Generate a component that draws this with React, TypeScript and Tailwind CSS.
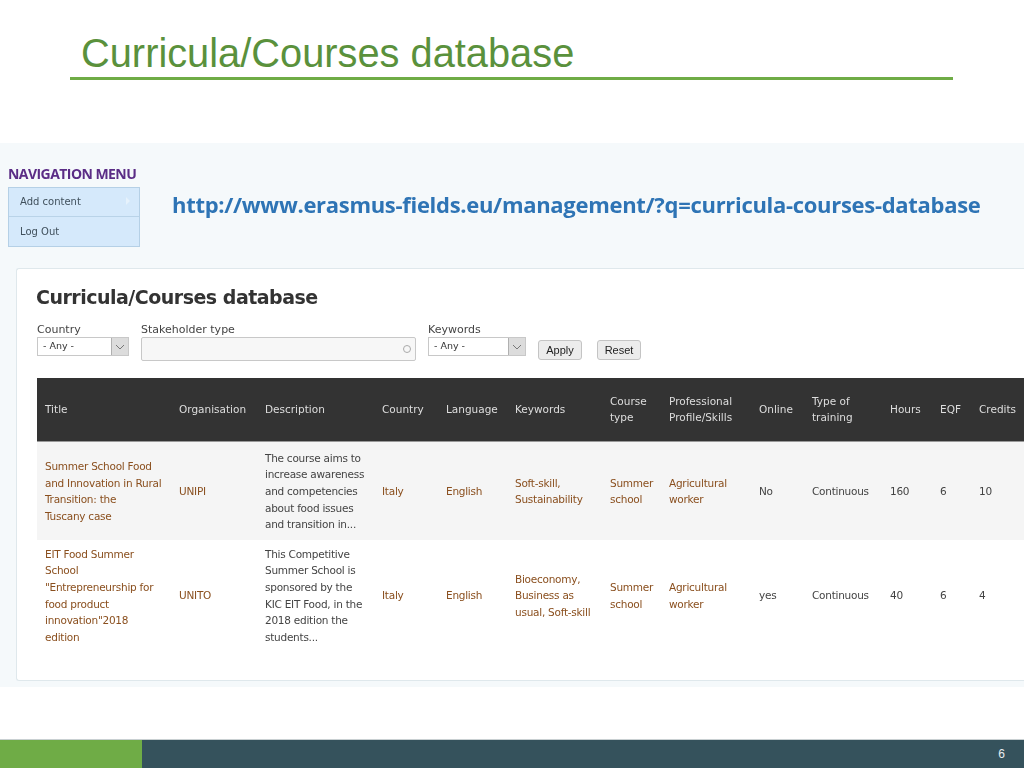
const headers = [
  { label: <>Title</>, w: "w-[134px]" },
  { label: <>Organisation</>, w: "w-[86px]" },
  { label: <>Description</>, w: "w-[117px]" },
  { label: <>Country</>, w: "w-[64px]" },
  { label: <>Language</>, w: "w-[69px]" },
  { label: <>Keywords</>, w: "w-[95px]" },
  { label: <>Course<br />type</>, w: "w-[59px]" },
  { label: <>Professional<br />Profile/Skills</>, w: "w-[90px]" },
  { label: <>Online</>, w: "w-[53px]" },
  { label: <>Type of<br />training</>, w: "w-[78px]" },
  { label: <>Hours</>, w: "w-[50px]" },
  { label: <>EQF</>, w: "w-[39px]" },
  { label: <>Credits</>, w: "w-[70px]" },
];

const rows = [
  {
    bg: "bg-[#f5f5f5]",
    h: "h-[99px]",
    cells: [
      [<>Summer School Food<br />and Innovation in Rural<br />Transition: the<br />Tuscany case</>, true],
      [<>UNIPI</>, true],
      [<>The course aims to<br />increase awareness<br />and competencies<br />about food issues<br />and transition in...</>, false],
      [<>Italy</>, true],
      [<>English</>, true],
      [<>Soft-skill,<br />Sustainability</>, true],
      [<>Summer<br />school</>, true],
      [<>Agricultural<br />worker</>, true],
      [<>No</>, false],
      [<>Continuous</>, false],
      [<>160</>, false],
      [<>6</>, false],
      [<>10</>, false],
    ],
  },
  {
    bg: "bg-white",
    h: "h-[110px]",
    cells: [
      [<>EIT Food Summer<br />School<br />"Entrepreneurship for<br />food product<br />innovation"2018<br />edition</>, true],
      [<>UNITO</>, true],
      [<>This Competitive<br />Summer School is<br />sponsored by the<br />KIC EIT Food, in the<br />2018 edition the<br />students...</>, false],
      [<>Italy</>, true],
      [<>English</>, true],
      [<>Bioeconomy,<br />Business as<br />usual, Soft-skill</>, true],
      [<>Summer<br />school</>, true],
      [<>Agricultural<br />worker</>, true],
      [<>yes</>, false],
      [<>Continuous</>, false],
      [<>40</>, false],
      [<>6</>, false],
      [<>4</>, false],
    ],
  },
] as const;

function Select({ w }: { w: string }) {
  return (
    <div className={`${w} h-[19px] flex items-stretch border border-[#c8c8c8] bg-white`}>
      <span className="flex-1 pl-[5px] text-[9.5px] leading-[16px] text-[#333]">- Any -</span>
      <span className="w-[17px] bg-[#dcdcdc] border-l border-[#b0b0b0] flex items-center justify-center">
        <svg width="10" height="6" viewBox="0 0 10 6" fill="none" stroke="#777" strokeWidth="1">
          <path d="M1 1l4 4 4-4" />
        </svg>
      </span>
    </div>
  );
}

function Btn({ children }: { children: string }) {
  return (
    <button className="w-[44px] h-[20px] rounded-[3px] border border-[#c4c4c4] bg-[#ececec] text-[11px] leading-[17px] text-[#222] font-['Liberation_Sans',sans-serif]">
      {children}
    </button>
  );
}

export default function App() {
  return (
    <div className="w-[1024px] h-[768px] overflow-hidden bg-white flex flex-col font-['Liberation_Sans',sans-serif]">
      <header className="h-[143px] shrink-0 pt-[30px] pl-[70px]">
        <div className="w-[883px] h-[50px] border-b-[3px] border-[#6fac46] pl-[11px]">
          <h1 className="text-[39.8px] leading-[46px] text-[#5a913c] font-normal whitespace-nowrap">Curricula/Courses database</h1>
        </div>
      </header>

      <section className="h-[544px] shrink-0 bg-[#f5f9fb] pt-[24px] font-['DejaVu_Sans',sans-serif] blur-[0.3px]">
        <div className="flex pl-[8px] h-[101px]">
          <div className="w-[132px] shrink-0">
            <div className="h-[20px] font-['Open_Sans',sans-serif] text-[14px] leading-[14px] font-bold text-[#5b2d86] tracking-[-0.55px] whitespace-nowrap">NAVIGATION MENU</div>
            <ul className="border border-[#b5d0e6] bg-[#d5e9fb] text-[10px] text-[#40505c]">
              <li className="h-[29px] pl-[11px] leading-[27px] border-b border-[#b9d3e8] flex justify-between pr-[9px]">
                <span>Add content</span>
                <svg width="4" height="8" viewBox="0 0 4 8" className="mt-[9px]"><path d="M0 0l4 4-4 4z" fill="#e6f2fc" /></svg>
              </li>
              <li className="h-[29px] pl-[11px] leading-[29px]">Log Out</li>
            </ul>
          </div>
          <a className="ml-[32px] mt-[20px] h-[34px] text-[22px] leading-[34px] font-bold text-[#2e74b5] font-['Open_Sans',sans-serif] tracking-[-0.3px] whitespace-nowrap">
            http://www.erasmus-fields.eu/management/?q=curricula-courses-database
          </a>
        </div>

        <div className="ml-[16px] h-[413px] bg-white border-t border-l border-b border-[#dfe8ec] rounded-tl-[3px] rounded-bl-[3px] pl-[20px] pt-[14px] overflow-hidden">
          <h2 className="h-[30px] text-[19px] leading-[28px] font-bold text-[#333] tracking-[-0.5px] whitespace-nowrap -ml-[1px]">Curricula/Courses database</h2>
          <div className="flex mt-[10px] h-[55px] items-start text-[11px] text-[#444]">
            <div className="w-[92px]">
              <div className="h-[14px] leading-[14px]">Country</div>
              <Select w="w-[92px]" />
            </div>
            <div className="ml-[12px] w-[275px]">
              <div className="h-[14px] leading-[14px]">Stakeholder type</div>
              <div className="h-[24px] rounded-[2px] border border-[#c8c8c8] bg-[#f7f7f7] flex items-center justify-end pr-[4px]">
                <span className="w-[8px] h-[8px] rounded-full border border-[#aaa]" />
              </div>
            </div>
            <div className="ml-[12px] w-[98px]">
              <div className="h-[14px] leading-[14px]">Keywords</div>
              <Select w="w-[98px]" />
            </div>
            <div className="ml-[12px] mt-[17px]"><Btn>Apply</Btn></div>
            <div className="ml-[15px] mt-[17px]"><Btn>Reset</Btn></div>
          </div>
          <table className="table-fixed w-[1004px] border-collapse text-[10.5px] tracking-[-0.25px] leading-[16.6px]">
            <thead>
              <tr className="h-[63px] bg-[#333333] text-[#dedede] text-left border-b border-[#999] tracking-normal">
                {headers.map((h, i) => (
                  <th key={i} className={`${h.w} pl-[8px] pr-0 font-normal whitespace-nowrap`}>{h.label}</th>
                ))}
              </tr>
            </thead>
            <tbody>
              {rows.map((r, ri) => (
                <tr key={ri} className={`${r.h} ${r.bg}`}>
                  {r.cells.map((c, i) => (
                    <td key={i} className={`pl-[8px] pr-0 pt-[1px] whitespace-nowrap ${c[1] ? "text-[#8a4f1e]" : "text-[#444]"}`}>{c[0]}</td>
                  ))}
                </tr>
              ))}
            </tbody>
          </table>
        </div>
      </section>

      <div className="flex-1" />

      <footer className="h-[29px] shrink-0 flex border-t border-[#c9d0d2] bg-[#35525c]">
        <div className="w-[142px] bg-[#6fac46]" />
        <div className="flex-1 text-right pr-[19px] text-[12px] leading-[28px] text-[#e8eef0]">6</div>
      </footer>
    </div>
  );
}
